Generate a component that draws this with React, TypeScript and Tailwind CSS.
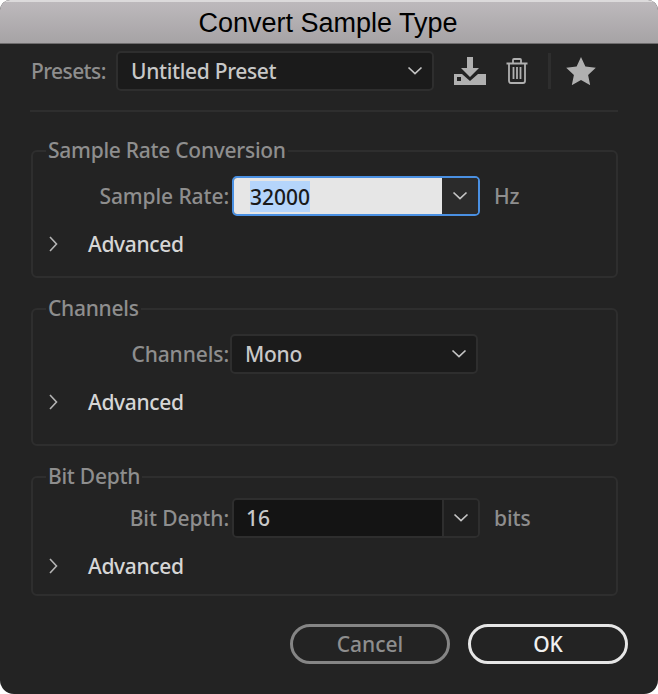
import React from 'react';

const Chevron = ({ className = '' }: { className?: string }) => (
  <svg width="16" height="10" viewBox="0 0 16 10" fill="none" className={className}>
    <path d="M1.5 1.5 L8 7.5 L14.5 1.5" stroke="#c4c4c4" strokeWidth="1.7" />
  </svg>
);

const Advanced = () => (
  <div className="flex items-center h-[24px] mt-[16px] text-[#d6d6d6] text-[21px] font-medium tracking-[-0.35px]">
    <svg width="9" height="16" viewBox="0 0 9 16" fill="none" className="ml-[16px]">
      <path d="M1 1 L7.5 8 L1 15" stroke="#b4b4b4" strokeWidth="1.6" />
    </svg>
    <span className="ml-[30px] pt-[2px]">Advanced</span>
  </div>
);

const Group = ({ title, height, children }: { title: string; height: string; children: React.ReactNode }) => (
  <fieldset className={`border-2 border-[#2e2e2e] rounded-[6px] ml-[31px] mr-[40px] px-0 ${height}`}>
    <legend className="ml-[13px] px-[2px] pb-[2px] text-[#8e8e8e] text-[21px] leading-[28px] font-medium tracking-[-0.27px]">{title}</legend>
    {children}
  </fieldset>
);

const Field = ({ label, children, unit, top }: { label: string; children: React.ReactNode; unit?: string; top: string }) => (
  <div className={`flex items-center h-[40px] ${top}`}>
    <span className="w-[196px] pt-[2px] text-right text-[#8e8e8e] text-[21px] font-medium tracking-[-0.1px]">{label}</span>
    <div className="ml-[3px]">{children}</div>
    {unit && <span className="ml-[14px] pt-[2px] text-[#8e8e8e] text-[21px] font-medium tracking-[-0.1px]">{unit}</span>}
  </div>
);

export default function App() {
  return (
    <div className="w-[658px] h-[694px] bg-[#232323] overflow-hidden font-['Noto_Sans','Open_Sans',sans-serif] rounded-t-[10px] rounded-b-[14px]">
      <div className="h-[44px] pt-[2px] flex items-center justify-center bg-gradient-to-b from-[#bdb9bc] to-[#a6a3a5] border-t-2 border-[#dcdadb] border-b border-b-[#6e6c6d] font-['Liberation_Sans',sans-serif] text-[27px] text-black">
        <span className="-ml-[2px]">Convert Sample Type</span>
      </div>

      <div className="flex items-center h-[42px] mt-[6px] pl-[31px]">
        <span className="w-[76px] pt-[2px] text-[#8e8e8e] text-[21px] font-medium tracking-[-0.6px]">Presets:</span>
        <div className="ml-[9px] w-[318px] h-[40px] flex items-center justify-between bg-[#1b1b1b] border-2 border-[#2e2e2e] rounded-[5px] pl-[13px] pr-[9px] text-[#c8c8c8] text-[21px] font-medium tracking-[-0.33px]">
          <span className="pt-[2px]">Untitled Preset</span>
          <Chevron />
        </div>
        <svg width="34" height="28" viewBox="0 0 34 28" className="ml-[19px]">
          <path fill="#b0b0b0" d="M14 0h6v11h6l-9 9-9-9h6z" />
          <path fill="#b0b0b0" d="M1 17h8l8 7 8-7h8v11H1z" />
          <rect x="4" y="20" width="4" height="4" fill="#232323" />
        </svg>
        <svg width="22" height="26" viewBox="0 0 22 26" fill="none" className="ml-[19px]" stroke="#b0b0b0">
          <path strokeWidth="1.8" d="M0.5 5.5h21M7 5V2a1 1 0 0 1 1-1h6a1 1 0 0 1 1 1v3" />
          <path strokeWidth="1.8" d="M3 6v17a2 2 0 0 0 2 2h12a2 2 0 0 0 2-2V6" />
          <path strokeWidth="1.8" d="M7.5 9v12M11 9v12M14.5 9v12" />
        </svg>
        <div className="ml-[20px] w-[3px] h-[36px] bg-[#2e2e2e]" />
        <svg width="30" height="28" viewBox="0 0 30 28" className="ml-[15px]">
          <path fill="#b0b0b0" d="M15 0l4.4 9.6 10.4 1.2-7.7 7.1 2.1 10.3L15 23l-9.2 5.2 2.1-10.3L.2 10.8l10.4-1.2z" />
        </svg>
      </div>

      <div className="h-[2px] bg-[#2e2e2e] ml-[30px] mr-[40px] mt-[18px]" />

      <div className="mt-[24px]">
        <Group title="Sample Rate Conversion" height="h-[142px]">
          <Field label="Sample Rate:" unit="Hz" top="mt-[10px]">
            <div className="w-[248px] h-[40px] flex border-2 border-[#4a90e2] rounded-[5px] overflow-hidden">
              <div className="flex-1 bg-[#e6e6e6] flex items-center pl-[16px] text-[#1a1a1a] text-[21px] font-medium">
                <span className="bg-[#b5d5fb] leading-[30px] pt-[1px]">32000</span>
              </div>
              <div className="w-[36px] bg-[#2b2b2b] flex items-center justify-center">
                <Chevron />
              </div>
            </div>
          </Field>
          <Advanced />
        </Group>
      </div>

      <div className="mt-[16px]">
        <Group title="Channels" height="h-[152px]">
          <Field label="Channels:" top="mt-[10px]">
            <div className="-ml-[2px] w-[248px] h-[40px] flex items-center justify-between bg-[#1b1b1b] border-2 border-[#2e2e2e] rounded-[5px] pl-[13px] pr-[9px] text-[#c8c8c8] text-[21px] font-medium tracking-[-0.3px]">
              <span className="pt-[2px]">Mono</span>
              <Chevron />
            </div>
          </Field>
          <Advanced />
        </Group>
      </div>

      <div className="mt-[16px]">
        <Group title="Bit Depth" height="h-[134px]">
          <Field label="Bit Depth:" unit="bits" top="mt-[6px]">
            <div className="w-[248px] h-[40px] flex border-2 border-[#2e2e2e] rounded-[5px] overflow-hidden">
              <div className="flex-1 bg-[#141414] flex items-center pl-[12px] pt-[2px] text-[#c8c8c8] text-[21px] font-medium">16</div>
              <div className="w-[36px] bg-[#1f1f1f] border-l-2 border-[#2e2e2e] flex items-center justify-center">
                <Chevron />
              </div>
            </div>
          </Field>
          <Advanced />
        </Group>
      </div>

      <div className="flex justify-end gap-[18px] pr-[30px] mt-[28px]">
        <button className="w-[160px] h-[40px] pt-[1px] rounded-full border-[3px] border-[#858585] text-[#8e8e8e] text-[21px] font-medium">Cancel</button>
        <button className="w-[160px] h-[40px] pt-[1px] rounded-full border-[3px] border-[#e6e6e6] text-[#f0f0f0] text-[21px] font-medium">OK</button>
      </div>
    </div>
  );
}
